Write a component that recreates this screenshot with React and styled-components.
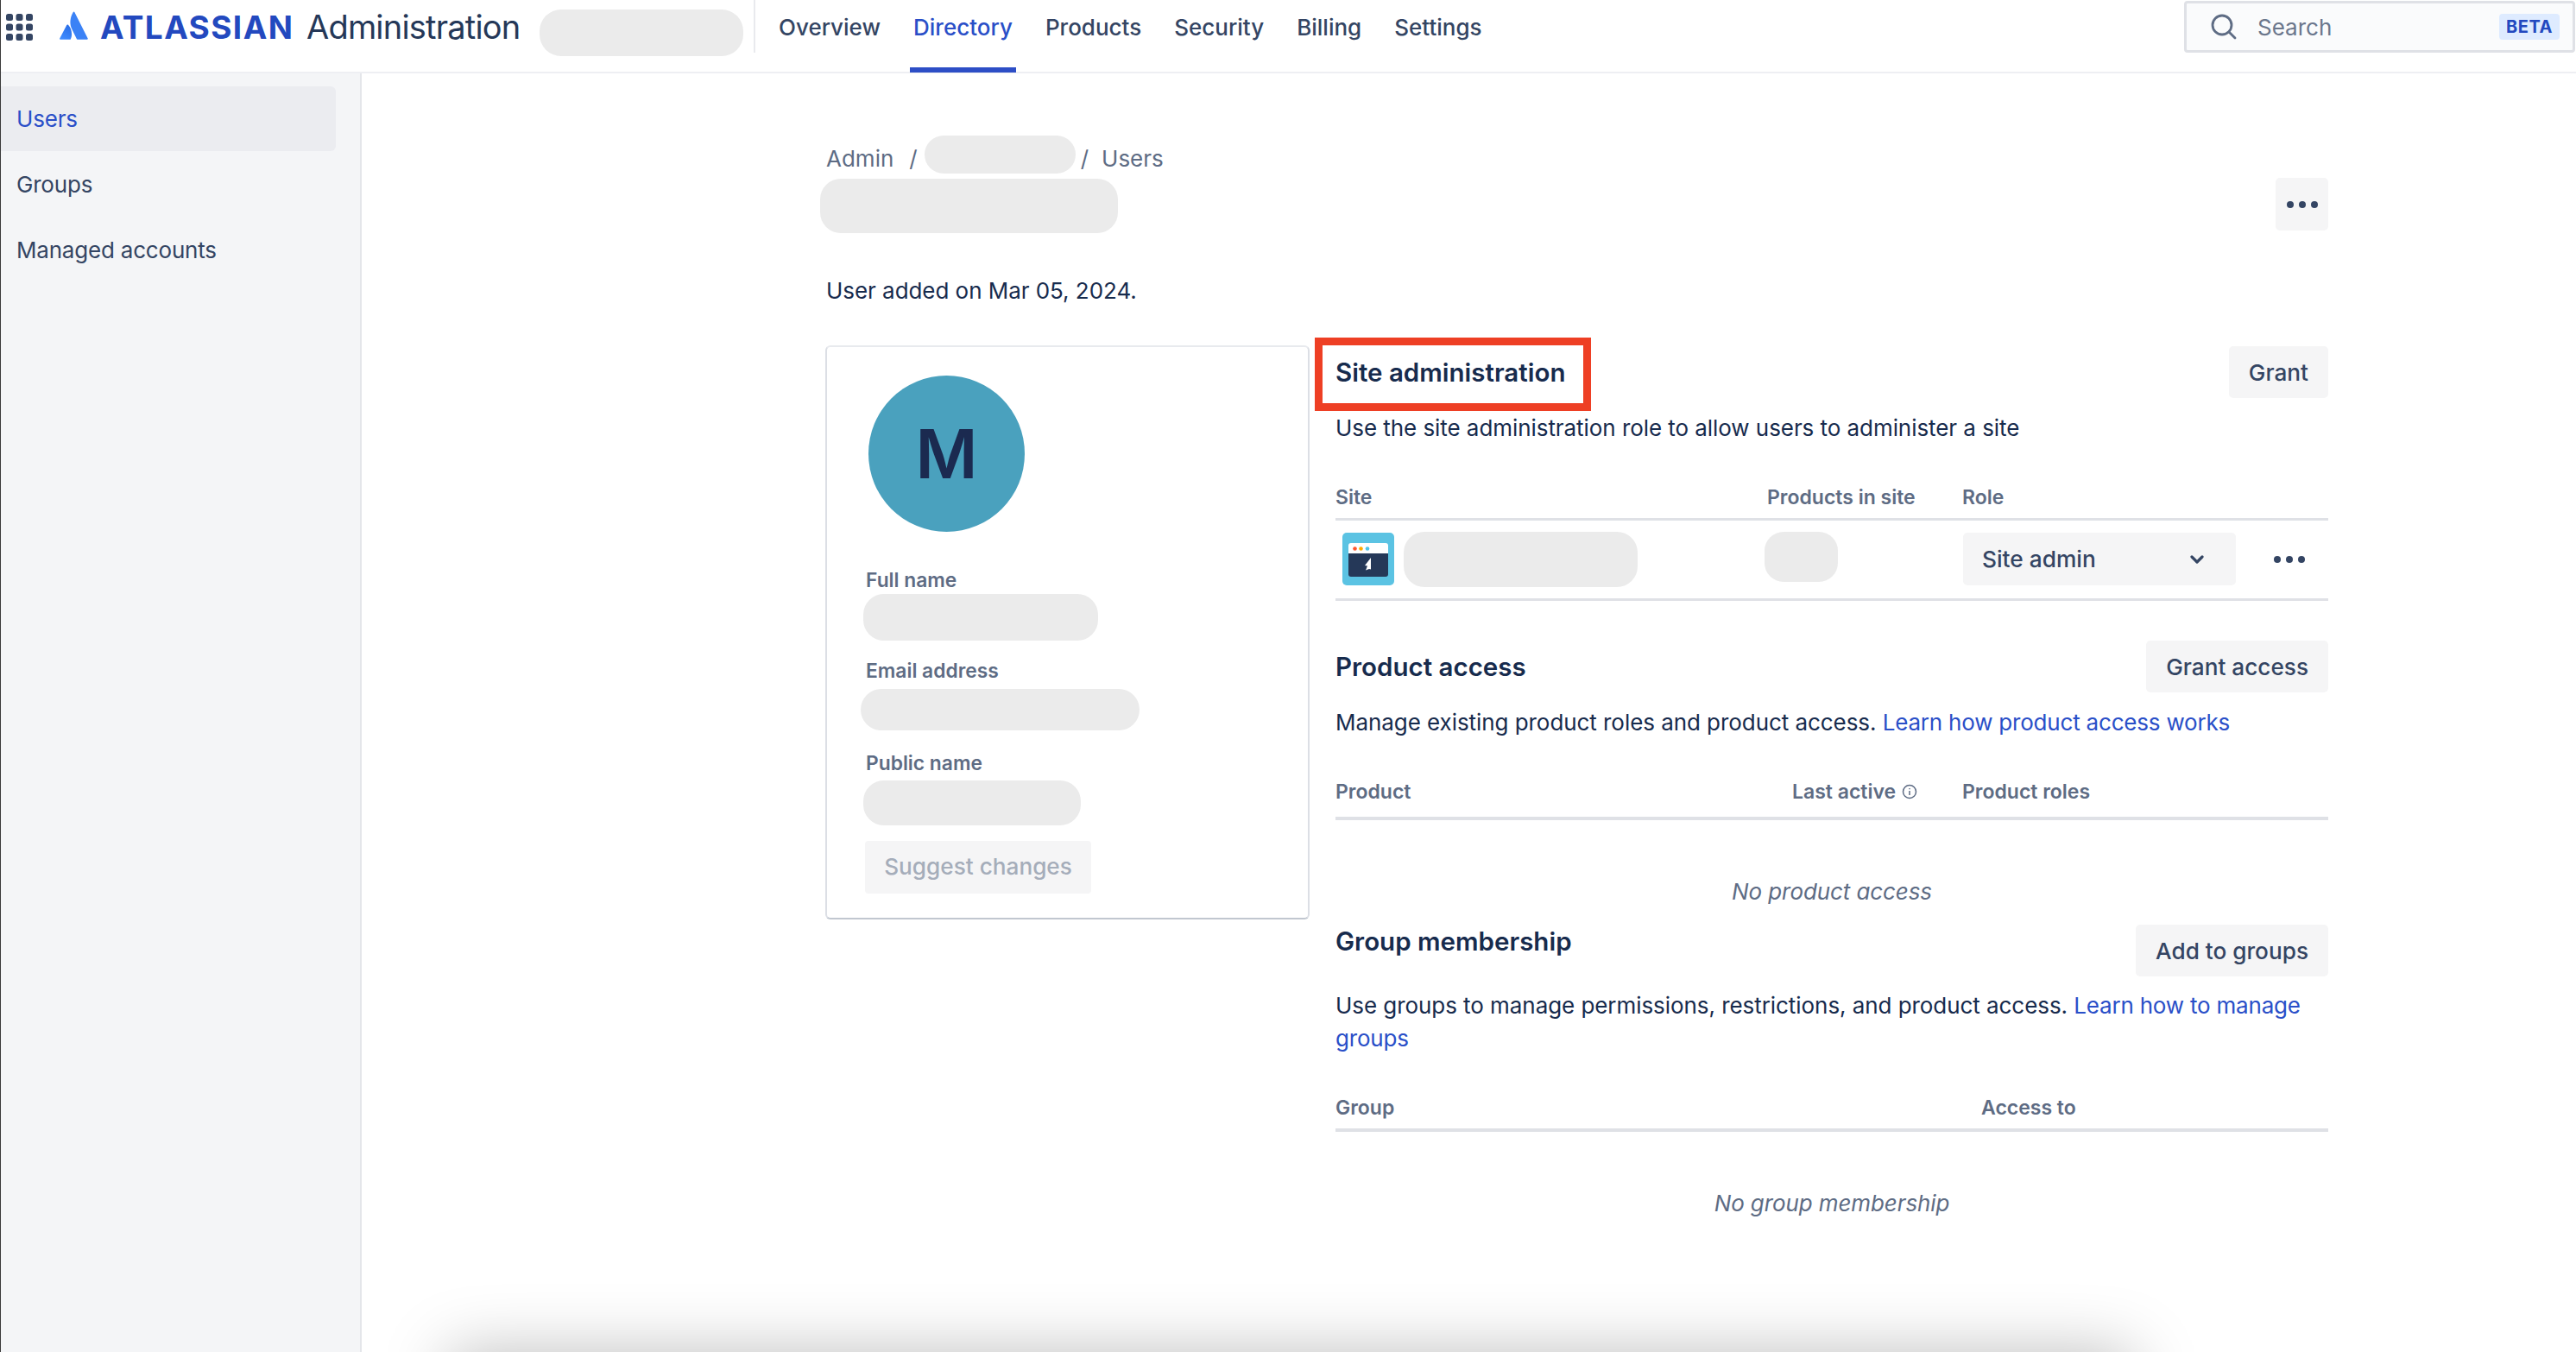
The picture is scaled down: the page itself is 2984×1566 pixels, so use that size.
import React from "react";
import styled, { createGlobalStyle } from "styled-components";

const Global = createGlobalStyle`
  html, body { margin: 0; padding: 0; background: #fff; }
  body { font-family: Inter, "Liberation Sans", sans-serif; color: #172b4d; -webkit-font-smoothing: antialiased; }
  * { box-sizing: border-box; }
`;

const Page = styled.div`
  position: relative;
  width: 2984px;
  height: 1566px;
  overflow: hidden;
  background: #fff;
  &::before {
    content: "";
    position: absolute;
    z-index: 3;
    left: 0;
    top: 0;
    bottom: 0;
    width: 1px;
    background: #3a3a3a;
  }
`;

const FloatingShadow = styled.div`
  position: absolute;
  left: 520px;
  width: 1950px;
  bottom: -100px;
  height: 100px;
  box-shadow: 0 0 76px rgba(0, 0, 0, 0.26);
`;

const Header = styled.header`
  display: flex;
  align-items: flex-start;
  height: 85px;
  padding-left: 7px;
  border-bottom: 2px solid #eeeff3;
`;

const GridIcon = styled.svg`
  width: 31px;
  height: 31px;
  margin-top: 16px;
  margin-right: 31px;
  flex: none;
`;

const LogoMark = styled.svg`
  width: 34px;
  height: 33px;
  margin-top: 13px;
  margin-right: 13px;
  flex: none;
`;

const LogoWord = styled.span`
  width: 224px;
  font-size: 37px;
  line-height: 64px;
  font-weight: 700;
  letter-spacing: 1.4px;
  color: #2349bf;
  margin-right: 15px;
  white-space: nowrap;
`;

const ProductName = styled.span`
  width: 248px;
  font-size: 38px;
  line-height: 62px;
  letter-spacing: -0.8px;
  color: #253858;
  margin-right: 22px;
  white-space: nowrap;
`;

const Redacted = styled.div`
  flex: none;
  width: ${(p) => p.$w}px;
  height: ${(p) => p.$h}px;
  border-radius: ${(p) => p.$r || 24}px;
  background: #ebebeb;
  margin: ${(p) => p.$m || "0"};
`;

const Divider = styled.div`
  width: 2px;
  height: 61px;
  background: #e9eaee;
  margin-left: 12px;
  margin-right: 23px;
`;

const Tabs = styled.nav`
  display: flex;
  gap: 30px;
`;

const Tab = styled.a`
  display: flex;
  align-items: center;
  height: 84px;
  padding: 0 4px 16px;
  font-size: 26px;
  font-weight: 500;
  white-space: nowrap;
  color: ${(p) => (p.$active ? "#2a4fc8" : "#344563")};
  border-bottom: 6px solid ${(p) => (p.$active ? "#2d4ec6" : "transparent")};
`;

const SearchBox = styled.div`
  display: flex;
  align-items: center;
  width: 453px;
  height: 60px;
  margin: 1px 1px 0 auto;
  padding: 0 15px 0 28px;
  border: 3px solid #dfe1e6;
  border-radius: 4px;
  background: #fafbfc;
`;

const SearchIcon = styled.svg`
  width: 30px;
  height: 30px;
  flex: none;
  margin-right: 24px;
`;

const SearchText = styled.span`
  flex: 1;
  font-size: 26px;
  color: #6b778c;
`;

const Beta = styled.span`
  display: flex;
  align-items: center;
  justify-content: center;
  width: 70px;
  height: 30px;
  border-radius: 4px;
  background: #deebff;
  font-size: 20px;
  font-weight: 700;
  letter-spacing: 0.5px;
  color: #2349bf;
`;

const Body = styled.div`
  display: grid;
  grid-template-columns: 419px 1fr;
  height: 1481px;
`;

const Sidebar = styled.aside`
  display: flex;
  flex-direction: column;
  gap: 1px;
  padding-top: 15px;
  background: #f4f5f7;
  border-right: 2px solid #e4e6ea;
`;

const SideItem = styled.a`
  display: flex;
  align-items: center;
  width: 389px;
  height: 75px;
  padding-left: 19px;
  border-radius: 0 6px 6px 0;
  font-size: 26px;
  letter-spacing: -0.2px;
  color: ${(p) => (p.$active ? "#2a4fc8" : "#344563")};
  background: ${(p) => (p.$active ? "#ebecf0" : "transparent")};
`;

const Main = styled.main`
  padding: 72px 287px 0 538px;
`;

const Crumbs = styled.div`
  display: flex;
  height: 44px;
`;

const Crumb = styled.span`
  padding-top: 11px;
  font-size: 26px;
  line-height: 32px;
  color: #5e6c84;
  white-space: nowrap;
`;

const Slash = styled(Crumb)`
  margin: ${(p) => p.$m};
`;

const TitleRow = styled.div`
  display: flex;
  justify-content: space-between;
  height: 63px;
  margin: 6px 0 0 -7px;
`;

const MoreButton = styled.button`
  display: flex;
  align-items: center;
  justify-content: center;
  gap: 6px;
  width: 61px;
  height: 61px;
  margin-top: -1px;
  padding: 0;
  border: 0;
  border-radius: 5px;
  background: #f5f5f6;
`;

const Dot = styled.i`
  width: 8px;
  height: 8px;
  border-radius: 50%;
  background: #344563;
`;

const Added = styled.p`
  margin: 51px 0 0;
  font-size: 26px;
  line-height: 32px;
  letter-spacing: -0.05px;
  color: #172b4d;
`;

const Columns = styled.div`
  display: grid;
  grid-template-columns: 561px 1150px;
  column-gap: 30px;
  margin: 47px 0 0 -1px;
`;

const ProfileCard = styled.section`
  align-self: start;
  height: 665px;
  padding: 33px 0 0 45px;
  border: 2px solid #dcdfe5;
  border-top-color: #e8eaee;
  border-bottom-color: #c1c7d0;
  border-radius: 6px;
`;

const Avatar = styled.div`
  display: flex;
  align-items: center;
  justify-content: center;
  width: 181px;
  height: 181px;
  margin-left: 3px;
  border-radius: 50%;
  background: #4aa1be;
  color: #1b2a50;
  font-size: 78px;
  font-weight: 600;
`;

const FieldLabel = styled.div`
  height: 30px;
  margin-top: ${(p) => p.$top}px;
  font-size: 22.8px;
  line-height: 30px;
  font-weight: 600;
  color: #5e6c84;
`;

const SuggestButton = styled.button`
  display: block;
  width: 262px;
  height: 61px;
  margin: 18px 0 0 -1px;
  padding: 0 0 2px;
  border: 0;
  border-radius: 4px;
  background: #f5f5f6;
  font-family: inherit;
  font-size: 26.2px;
  font-weight: 500;
  color: #a5adba;
`;

const Details = styled.div`
  padding-top: 1px;
`;

const SectionHead = styled.div`
  display: flex;
  justify-content: space-between;
  align-items: ${(p) => (p.$top ? "flex-start" : "center")};
  height: 60px;
  margin-top: ${(p) => p.$mt || 0}px;
`;

const SectionTitle = styled.h2`
  position: relative;
  margin: 0;
  font-size: 29.5px;
  line-height: 38px;
  font-weight: 600;
  color: #172b4d;
`;

const Callout = styled.span`
  position: absolute;
  left: -24px;
  top: -21px;
  width: 320px;
  height: 85px;
  border: 9px solid #ee3f24;
  pointer-events: none;
`;

const ActionButton = styled.button`
  height: 60px;
  padding: 0 23px;
  border: 0;
  border-radius: 5px;
  background: #f5f5f6;
  font-family: inherit;
  font-size: 26.2px;
  font-weight: 500;
  color: #344563;
`;

const Description = styled.p`
  margin: ${(p) => p.$mt || 16}px 0 0;
  font-size: 26px;
  letter-spacing: -0.06px;
  line-height: 38px;
  color: #172b4d;
`;

const DocLink = styled.a`
  letter-spacing: -0.2px;
  color: #2a4fc8;
`;

const TableHead = styled.div`
  display: grid;
  grid-template-columns: ${(p) => p.$cols};
  height: ${(p) => p.$h}px;
  margin-top: 46px;
  border-bottom: ${(p) => p.$b || 3}px solid #dfe1e6;
`;

const HeadCell = styled.span`
  display: flex;
  align-items: center;
  gap: 7px;
  height: 30px;
  font-size: 23px;
  font-weight: 600;
  color: #5e6c84;
`;

const InfoIcon = styled.svg`
  width: 18px;
  height: 18px;
  flex: none;
`;

const SiteRow = styled.div`
  display: grid;
  grid-template-columns: 497px 230px 1fr;
  height: 93px;
  padding-top: 14px;
  border-bottom: 3px solid #dfe1e6;
`;

const SiteCell = styled.div`
  display: flex;
  align-items: flex-start;
  padding-left: ${(p) => p.$pad || 0}px;
`;

const SiteIcon = styled.svg`
  width: 60px;
  height: 61px;
  flex: none;
`;

const RoleSelect = styled.div`
  display: flex;
  align-items: center;
  justify-content: space-between;
  width: 316px;
  height: 61px;
  padding: 0 37px 0 22px;
  border-radius: 5px;
  background: #f5f5f6;
  font-size: 26.3px;
  font-weight: 500;
  color: #344563;
`;

const Chevron = styled.svg`
  width: 16px;
  height: 12px;
`;

const RowMore = styled.div`
  display: flex;
  align-items: center;
  gap: 6px;
  height: 61px;
  margin-left: 44px;
`;

const EmptyText = styled.p`
  margin: 64px 0 0;
  font-size: 26px;
  letter-spacing: -0.1px;
  line-height: 38px;
  font-style: italic;
  text-align: center;
  color: #5e6c84;
`;

const Dots = () => (
  <>
    <Dot />
    <Dot />
    <Dot />
  </>
);

const Grid = () => (
  <GridIcon viewBox="0 0 31 31" fill="#344563">
    {[0, 11.5, 23].map((y) =>
      [0, 11.5, 23].map((x) => <rect key={`${x}-${y}`} x={x} y={y} width="8" height="8" rx="2.5" />)
    )}
  </GridIcon>
);

const Logo = () => (
  <LogoMark viewBox="0 0 34 33">
    <defs>
      <linearGradient id="atl" x1="13" y1="18" x2="4" y2="33" gradientUnits="userSpaceOnUse">
        <stop offset="0" stopColor="#2a6fe8" />
        <stop offset="1" stopColor="#3f8cff" />
      </linearGradient>
    </defs>
    <path
      d="M10 15.8c-.5-.6-1.3-.5-1.7.2L.2 31.6c-.3.6.1 1.2.7 1.2H12c.4 0 .7-.2.9-.6 2.4-5 1-12.7-2.9-16.4z"
      fill="url(#atl)"
    />
    <path
      d="M15.8 1c-4 6.6-4.3 14-1.5 19.8l5.5 11.3c.2.4.5.7.9.7h11.3c.6 0 1-.6.7-1.2L17.3 1c-.3-.7-1.1-.7-1.5 0z"
      fill="#3b82f6"
    />
  </LogoMark>
);

const Site = () => (
  <SiteIcon viewBox="0 0 60 61">
    <rect width="60" height="61" rx="5" fill="#5bc3e3" />
    <path d="M7 15a3 3 0 0 1 3-3h40a3 3 0 0 1 3 3v9H7z" fill="#fff" />
    <path d="M7 24h46v24a3 3 0 0 1-3 3H10a3 3 0 0 1-3-3z" fill="#253858" />
    <circle cx="14.5" cy="18.5" r="2.3" fill="#ff5630" />
    <circle cx="21.5" cy="18.5" r="2.3" fill="#ffab00" />
    <circle cx="29" cy="18.5" r="2.3" fill="#4fc3e8" />
    <path d="M33 29l-7 9 3 .5-2 5 4-1.5 2 .5z" fill="#fff" />
  </SiteIcon>
);

export default function App() {
  return (
    <Page>
      <Global />
      <Header>
        <Grid />
        <Logo />
        <LogoWord>ATLASSIAN</LogoWord>
        <ProductName>Administration</ProductName>
        <Redacted $w={236} $h={54} $r={25} $m="11px 0 0" />
        <Divider />
        <Tabs>
          <Tab>Overview</Tab>
          <Tab $active>Directory</Tab>
          <Tab>Products</Tab>
          <Tab>Security</Tab>
          <Tab>Billing</Tab>
          <Tab>Settings</Tab>
        </Tabs>
        <SearchBox>
          <SearchIcon viewBox="0 0 30 30" fill="none" stroke="#5e6c84" strokeWidth="2.8">
            <circle cx="13" cy="13" r="11" />
            <path d="M21 21l7 7" strokeLinecap="round" />
          </SearchIcon>
          <SearchText>Search</SearchText>
          <Beta>BETA</Beta>
        </SearchBox>
      </Header>
      <Body>
        <Sidebar>
          <SideItem $active>Users</SideItem>
          <SideItem>Groups</SideItem>
          <SideItem>Managed accounts</SideItem>
        </Sidebar>
        <Main>
          <Crumbs>
            <Crumb>Admin</Crumb>
            <Slash $m="0 8px 0 18px">/</Slash>
            <Redacted $w={175} $h={44} $r={22} />
            <Slash $m="0 15px 0 6px">/</Slash>
            <Crumb>Users</Crumb>
          </Crumbs>
          <TitleRow>
            <Redacted $w={345} $h={63} $r={24} />
            <MoreButton aria-label="More">
              <Dots />
            </MoreButton>
          </TitleRow>
          <Added>User added on Mar 05, 2024.</Added>
          <Columns>
            <ProfileCard>
              <Avatar>M</Avatar>
              <FieldLabel $top={41}>Full name</FieldLabel>
              <Redacted $w={272} $h={54} $r={24} $m="1px 0 0 -3px" />
              <FieldLabel $top={20}>Email address</FieldLabel>
              <Redacted $w={323} $h={48} $r={24} $m="6px 0 0 -6px" />
              <FieldLabel $top={23}>Public name</FieldLabel>
              <Redacted $w={252} $h={52} $r={24} $m="5px 0 0 -3px" />
              <SuggestButton>Suggest changes</SuggestButton>
            </ProfileCard>
            <Details>
              <SectionHead>
                <SectionTitle>
                  Site administration
                  <Callout />
                </SectionTitle>
                <ActionButton>Grant</ActionButton>
              </SectionHead>
              <Description>Use the site administration role to allow users to administer a site</Description>
              <TableHead $cols="500px 226px 1fr" $h={42}>
                <HeadCell>Site</HeadCell>
                <HeadCell>Products in site</HeadCell>
                <HeadCell>Role</HeadCell>
              </TableHead>
              <SiteRow>
                <SiteCell $pad={8}>
                  <Site />
                  <Redacted $w={271} $h={64} $r={24} $m="-1px 0 0 11px" />
                </SiteCell>
                <SiteCell>
                  <Redacted $w={85} $h={58} $r={22} $m="-1px 0 0" />
                </SiteCell>
                <SiteCell>
                  <RoleSelect>
                    Site admin
                    <Chevron viewBox="0 0 16 12" fill="none" stroke="#344563" strokeWidth="3.2">
                      <path d="M2 3l6 6 6-6" strokeLinecap="round" strokeLinejoin="round" />
                    </Chevron>
                  </RoleSelect>
                  <RowMore>
                    <Dots />
                  </RowMore>
                </SiteCell>
              </SiteRow>

              <SectionHead $mt={46}>
                <SectionTitle>Product access</SectionTitle>
                <ActionButton>Grant access</ActionButton>
              </SectionHead>
              <Description>
                Manage existing product roles and product access. <DocLink>Learn how product access works</DocLink>
              </Description>
              <TableHead $cols="529px 197px 1fr" $h={48} $b={4}>
                <HeadCell>Product</HeadCell>
                <HeadCell>
                  Last active
                  <InfoIcon viewBox="0 0 18 18" fill="none" stroke="#5e6c84" strokeWidth="1.5">
                    <circle cx="9" cy="9" r="7.5" />
                    <path d="M9 8v5M9 5v1.2" />
                  </InfoIcon>
                </HeadCell>
                <HeadCell>Product roles</HeadCell>
              </TableHead>
              <EmptyText>No product access</EmptyText>

              <SectionHead $mt={19} $top>
                <SectionTitle>Group membership</SectionTitle>
                <ActionButton>Add to groups</ActionButton>
              </SectionHead>
              <Description $mt={15}>
                Use groups to manage permissions, restrictions, and product access.{" "}
                <DocLink>Learn how to manage groups</DocLink>
              </Description>
              <TableHead $cols="748px 1fr" $h={43} $b={4}>
                <HeadCell>Group</HeadCell>
                <HeadCell>Access to</HeadCell>
              </TableHead>
              <EmptyText>No group membership</EmptyText>
            </Details>
          </Columns>
        </Main>
      </Body>
      <FloatingShadow />
    </Page>
  );
}
